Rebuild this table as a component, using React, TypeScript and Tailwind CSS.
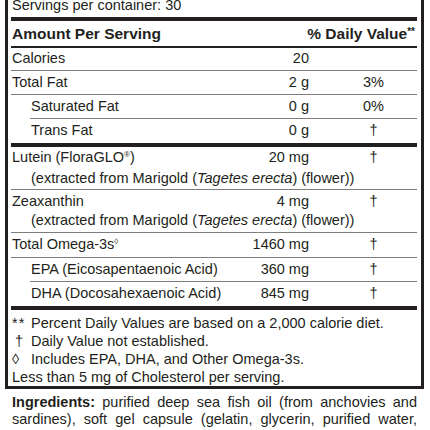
import React from "react";

type Row = {
	label: React.ReactNode;
	amount: string;
	dv?: string;
	sub?: boolean;
	h?: string;
	line?: "thin" | "none";
};

// heights include the 1px bottom rule (border-box)
const rows: Row[] = [
	{ label: "Calories", amount: "20", h: "h-[23px]" },
	{ label: "Total Fat", amount: "2 g", dv: "3%", h: "h-[24px]" },
	{ label: "Saturated Fat", amount: "0 g", dv: "0%", sub: true, h: "h-[24px]" },
	{ label: "Trans Fat", amount: "0 g", dv: "†", sub: true, h: "h-[24px]", line: "none" },
];

const rows2: Row[] = [
	{
		label: (
			<>
				Total Omega-3s<span className="relative -top-[5px] text-[8px]">◊</span>
			</>
		),
		amount: "1460 mg",
		dv: "†",
		h: "h-[25px]",
	},
	{ label: "EPA (Eicosapentaenoic Acid)", amount: "360 mg", dv: "†", sub: true, h: "h-[24px]" },
	{ label: "DHA (Docosahexaenoic Acid)", amount: "845 mg", dv: "†", sub: true, h: "h-[24px]", line: "none" },
];

function FactRow({ row }: { row: Row }) {
	return (
		<div
			className={
				"flex items-center pl-[1px] " +
				row.h +
				(row.sub ? " ml-[19px]" : "") +
				(row.line === "none" ? "" : " border-b border-[#7d7d7d]")
			}
		>
			<div className="flex-1">{row.label}</div>
			<div className="text-right">{row.amount}</div>
			<div className="w-[108px] pl-[21px] text-center">{row.dv}</div>
		</div>
	);
}

function Extracted({ name, amount }: { name: React.ReactNode; amount: string }) {
	return (
		<div className="flex h-[43px] flex-col justify-center border-b border-[#7d7d7d] pl-[1px] leading-[19px]">
			<div className="flex">
				<div className="flex-1">{name}</div>
				<div className="text-right">{amount}</div>
				<div className="w-[108px] pl-[21px] text-center">†</div>
			</div>
			<div className="whitespace-nowrap pl-[19px]">
				(extracted from Marigold (<i>Tagetes erecta</i>) (flower))
			</div>
		</div>
	);
}

export default function App() {
	return (
		<div
			className="relative h-[430px] w-[430px] overflow-hidden bg-white text-[14.5px] text-[#231f20]"
			style={{ fontFamily: "'Liberation Sans', Arial, sans-serif" }}
		>
			<div className="-mt-[3px]">
				{/* Facts panel */}
				<div className="ml-[5px] w-[419px] border-x-[3px] border-b-[3px] border-[#231f20] pl-[3px] pr-[4px]">
					<div className="h-[16px] pl-[1px] leading-[16px]">Servings per container: 30</div>
					<div className="mt-[4px] h-[4px] bg-[#231f20]" />
					<div className="flex h-[27px] items-center border-b-2 border-[#231f20] pl-[1px] text-[15.5px] font-bold">
						<div className="flex-1">Amount Per Serving</div>
						<div className="pr-[2px]">
							% Daily Value<span className="relative -top-[4px] text-[10px]">**</span>
						</div>
					</div>

					{rows.map((r, i) => (
						<FactRow key={i} row={r} />
					))}
					<div className="h-[4px] bg-[#231f20]" />

					<Extracted
						name={
							<>
								Lutein (FloraGLO<span className="relative -top-[5px] text-[8px]">®</span>)
							</>
						}
						amount="20 mg"
					/>
					<Extracted name="Zeaxanthin" amount="4 mg" />

					{rows2.map((r, i) => (
						<FactRow key={i} row={r} />
					))}
					<div className="h-[4px] bg-[#231f20]" />

					{/* Footnotes */}
					<div className="pl-[1px] pt-[4px] leading-[18px]">
						<div className="flex">
							<span className="w-[19px] shrink-0 tracking-[1px]">**</span>
							<span>Percent Daily Values are based on a 2,000 calorie diet.</span>
						</div>
						<div className="flex">
							<span className="w-[19px] shrink-0 pl-[3px]">†</span>
							<span>Daily Value not established.</span>
						</div>
						<div className="flex">
							<span className="w-[19px] shrink-0">◊</span>
							<span>Includes EPA, DHA, and Other Omega-3s.</span>
						</div>
						<div>Less than 5 mg of Cholesterol per serving.</div>
					</div>
				</div>

				{/* Ingredients */}
				<div className="ml-[12px] mt-[5px] w-[405px] text-justify leading-[17px] [text-align-last:justify]">
					<div>
						<b>Ingredients:</b> purified deep sea fish oil (from anchovies and
					</div>
					<div>sardines), soft gel capsule (gelatin, glycerin, purified water,</div>
				</div>
			</div>
		</div>
	);
}
